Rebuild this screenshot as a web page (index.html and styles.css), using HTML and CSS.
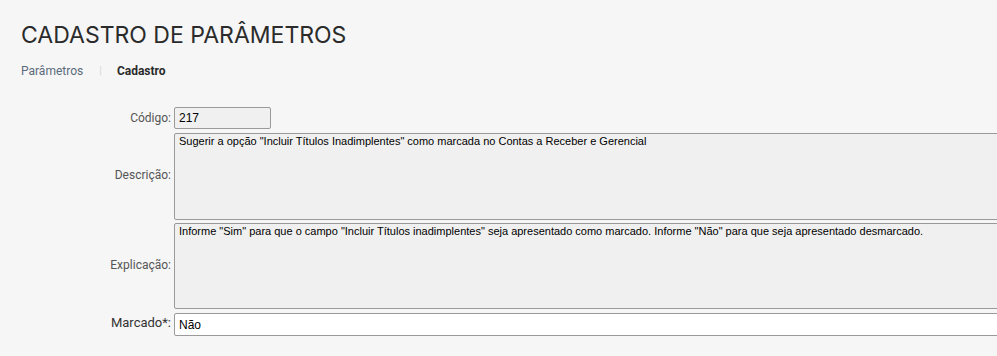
FILE: index.html
```html
<!DOCTYPE html>
<html lang="pt-BR">
<head>
  <meta charset="UTF-8" />
  <title>Cadastro de Parâmetros</title>
  <link rel="stylesheet" href="styles.css">
</head>
<body>

<div class="page-header">
  <h1>CADASTRO DE PARÂMETROS</h1>
  <div class="breadcrumb">
    <a href="#">Parâmetros</a>
    <span class="sep">|</span>
    <span class="current">Cadastro</span>
  </div>
</div>

<div class="form">
  <label for="codigo">Código:</label>
  <input type="text" id="codigo" class="field short" value="217" readonly>

  <label for="descricao">Descrição:</label>
  <textarea id="descricao" class="field area desc" readonly>Sugerir a opção "Incluir Títulos Inadimplentes" como marcada no Contas a Receber e Gerencial</textarea>

  <label for="explicacao">Explicação:</label>
  <textarea id="explicacao" class="field area expl" readonly>Informe "Sim" para que o campo "Incluir Títulos inadimplentes" seja apresentado como marcado. Informe "Não" para que seja apresentado desmarcado.</textarea>

  <label for="marcado" class="required">Marcado*:</label>
  <input type="text" id="marcado" class="field editable" value="Não">
</div>

</body>
</html>
```

FILE: styles.css
```css
* { box-sizing: border-box; }

html, body {
  margin: 0;
  padding: 0;
  overflow: hidden;
}

body {
  background-color: #f6f6f6;
  font-family: Roboto, "Liberation Sans", sans-serif;
  color: #333;
}

.page-header {
  padding: 21px 0 0 21px;
}

h1 {
  margin: 0;
  font-family: Inter, "Liberation Sans", sans-serif;
  font-weight: 400;
  font-size: 23px;
  line-height: 28px;
  color: #2b2b2b;
}

.breadcrumb {
  display: flex;
  align-items: center;
  margin-top: 14px;
  font-size: 12px;
  line-height: 16px;
}

.breadcrumb a {
  color: #5b6b7b;
  text-decoration: none;
}

.breadcrumb .sep {
  color: #d8d8d8;
  margin: 0 15px 0 16px;
  font-size: 11px;
}

.breadcrumb .current {
  font-weight: 700;
  color: #2b2b2b;
}

.form {
  display: grid;
  grid-template-columns: 171px 1000px;
  column-gap: 3px;
  align-items: center;
  margin-top: 28px;
}

.form label {
  text-align: right;
  font-size: 12px;
  color: #555;
}

.form label.required {
  font-size: 13px;
  color: #333;
}

.field {
  display: block;
  font-family: "Liberation Sans", Arial, sans-serif;
  font-size: 12px;
  color: #000;
  background-color: #f0f0f0;
  border: 1px solid #9a9a9a;
  border-radius: 2px;
  padding: 2px 4px;
  margin: 0;
  outline: none;
}

.short {
  width: 97px;
  height: 22px;
}

.area {
  width: 1000px;
  resize: none;
  overflow: hidden;
  font-size: 11px;
  line-height: 13px;
  padding-top: 1px;
}

.desc {
  height: 87px;
  margin-top: 4px;
}

.expl {
  height: 86px;
  margin-top: 3px;
}

.editable {
  width: 1000px;
  height: 23px;
  margin-top: 4px;
  background-color: #fff;
}
```
